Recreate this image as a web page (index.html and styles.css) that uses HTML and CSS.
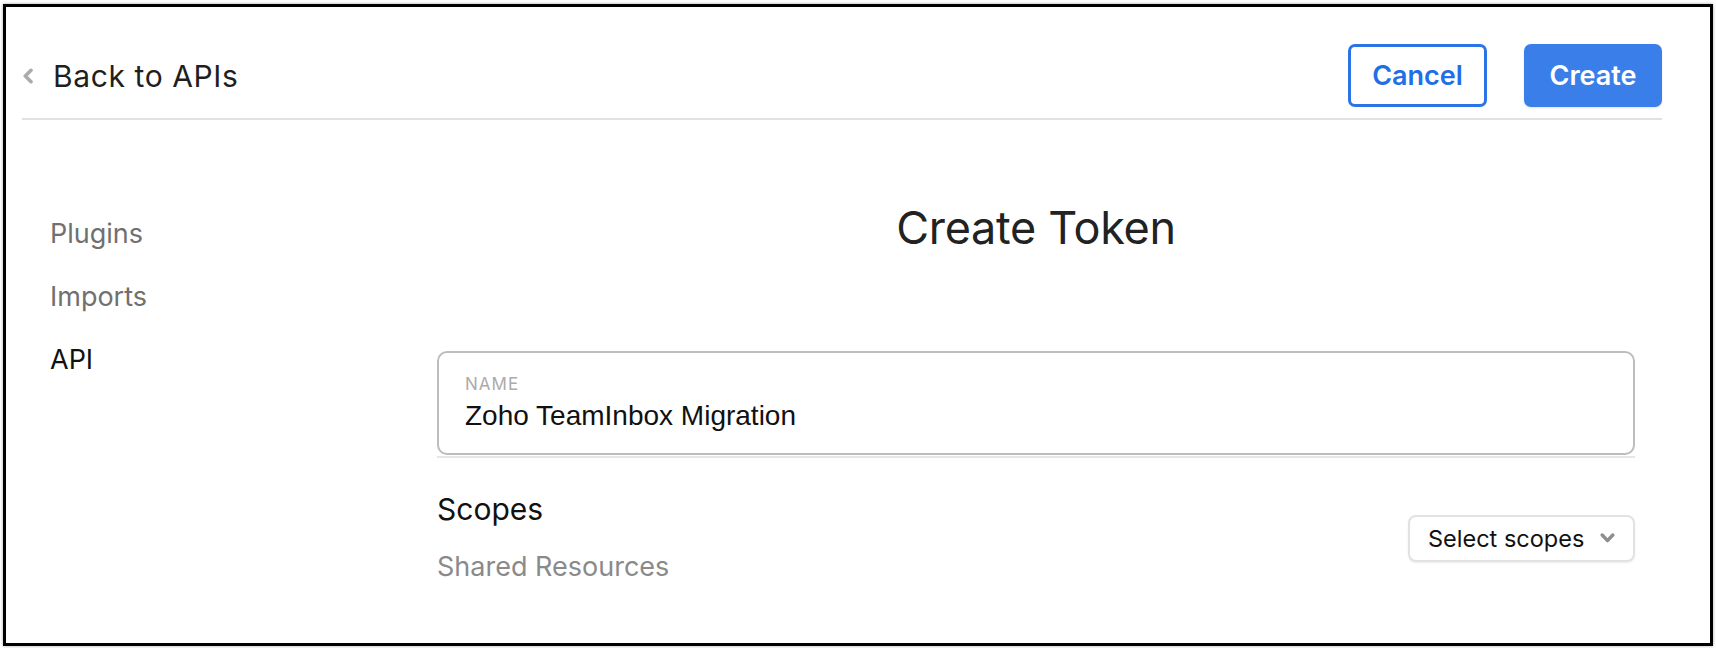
FILE: index.html
```html
<!DOCTYPE html>
<html lang="en">
<head>
<meta charset="utf-8">
<title>Create Token</title>
<link rel="stylesheet" href="styles.css">
</head>
<body>
<div class="frame">
  <header class="topbar">
    <a class="back" href="#">
      <svg class="back-icon" width="12" height="16" viewBox="0 0 12 16" aria-hidden="true"><path d="M9 2.3 L3.3 8 L9 13.7" fill="none" stroke="#ababab" stroke-width="3.6" stroke-linecap="round" stroke-linejoin="round"/></svg>
      <span>Back to APIs</span>
    </a>
    <div class="actions">
      <button class="btn btn-outline">Cancel</button>
      <button class="btn btn-primary">Create</button>
    </div>
  </header>
  <main class="main">
    <nav class="sidebar">
      <a class="nav-item" href="#">Plugins</a>
      <a class="nav-item" href="#">Imports</a>
      <a class="nav-item active" href="#">API</a>
    </nav>
    <section class="content">
      <h1 class="title">Create Token</h1>
      <div class="field-wrap">
        <div class="field">
          <div class="field-label">NAME</div>
          <div class="field-value">Zoho TeamInbox Migration</div>
        </div>
      </div>
      <div class="scopes">
        <div class="scopes-text">
          <div class="scopes-title">Scopes</div>
          <div class="scopes-sub">Shared Resources</div>
        </div>
        <button class="select">
          <span>Select scopes</span>
          <svg width="15" height="10" viewBox="0 0 15 10" aria-hidden="true"><path d="M2.2 2 L7.5 7.6 L12.8 2" fill="none" stroke="#8e8e8e" stroke-width="3.4" stroke-linecap="round" stroke-linejoin="round"/></svg>
        </button>
      </div>
    </section>
  </main>
</div>
</body>
</html>
```

FILE: styles.css
```css
* { box-sizing: border-box; }
html, body { margin: 0; padding: 0; background: #ffffff; }
body { font-family: Inter, "Noto Sans", "Liberation Sans", sans-serif; color: #1f1f1f; }

.frame {
  margin: 4px 3px 2px 3px;
  height: 642px;
  border: 3px solid #000;
  box-shadow: 0 0 3px rgba(0,0,0,0.35);
  background: #fff;
  overflow: hidden;
}

.topbar {
  display: flex;
  align-items: center;
  justify-content: space-between;
  margin: 0 48px 0 16px;
  padding: 37px 0 11px 0;
  border-bottom: 2px solid #e1e1e1;
}

.back {
  display: flex;
  align-items: center;
  gap: 19px;
  text-decoration: none;
  color: #1f1f1f;
  font-size: 30px;
  letter-spacing: 0.6px;
}
.back-icon { display: block; }

.actions { display: flex; gap: 37px; }

.btn {
  height: 63px;
  border-radius: 7px;
  font-family: Inter, "Noto Sans", sans-serif;
  font-size: 27px;
  font-weight: 600;
  cursor: pointer;
}
.btn-outline {
  width: 139px;
  background: #fff;
  color: #1f6fe6;
  border: 3px solid #2a74e8;
}
.btn-primary {
  width: 138px;
  background: #3a7fe9;
  color: #fff;
  border: 0;
  box-shadow: 0 1px 2px rgba(0,0,0,0.12);
}

.main {
  display: grid;
  grid-template-columns: 431px 1fr;
  padding: 80px 75px 0 0;
}

.sidebar {
  display: flex;
  flex-direction: column;
  padding: 2px 0 0 44px;
}
.nav-item {
  font-size: 27px;
  line-height: 63px;
  color: #707070;
  text-decoration: none;
}
.nav-item.active { color: #111; }

.content { display: flex; flex-direction: column; }

.title {
  margin: 0;
  text-align: center;
  font-size: 45px;
  line-height: 56px;
  font-weight: 400;
  color: #222;
  letter-spacing: -0.3px;
}

.field-wrap {
  margin-top: 95px;
  border-bottom: 2px solid #e6e6e6;
  padding-bottom: 1px;
}
.field {
  border: 2px solid #bdbdbd;
  border-radius: 10px;
  padding: 20px 26px 20px 26px;
}
.field-label {
  font-size: 17px;
  line-height: 22px;
  letter-spacing: 1px;
  color: #ababab;
}
.field-value {
  margin-top: 4px;
  font-family: "Liberation Sans", Arial, sans-serif;
  font-size: 28px;
  line-height: 34px;
  color: #111;
}

.scopes {
  display: flex;
  align-items: center;
  justify-content: space-between;
  margin-top: 31px;
}
.scopes-title {
  font-size: 30px;
  line-height: 40px;
  color: #111;
}
.scopes-sub {
  margin-top: 18px;
  font-size: 27px;
  line-height: 40px;
  color: #8a8a8a;
}

.select {
  display: flex;
  align-items: center;
  gap: 16px;
  width: 227px;
  height: 47px;
  padding: 0 16px 0 18px;
  background: #fff;
  border: 2px solid #e2e2e2;
  border-radius: 8px;
  box-shadow: 0 1px 2px rgba(0,0,0,0.08);
  font-family: Inter, "Noto Sans", sans-serif;
  font-size: 23.5px;
  color: #111;
  cursor: pointer;
}
.select svg { display: block; }
```
